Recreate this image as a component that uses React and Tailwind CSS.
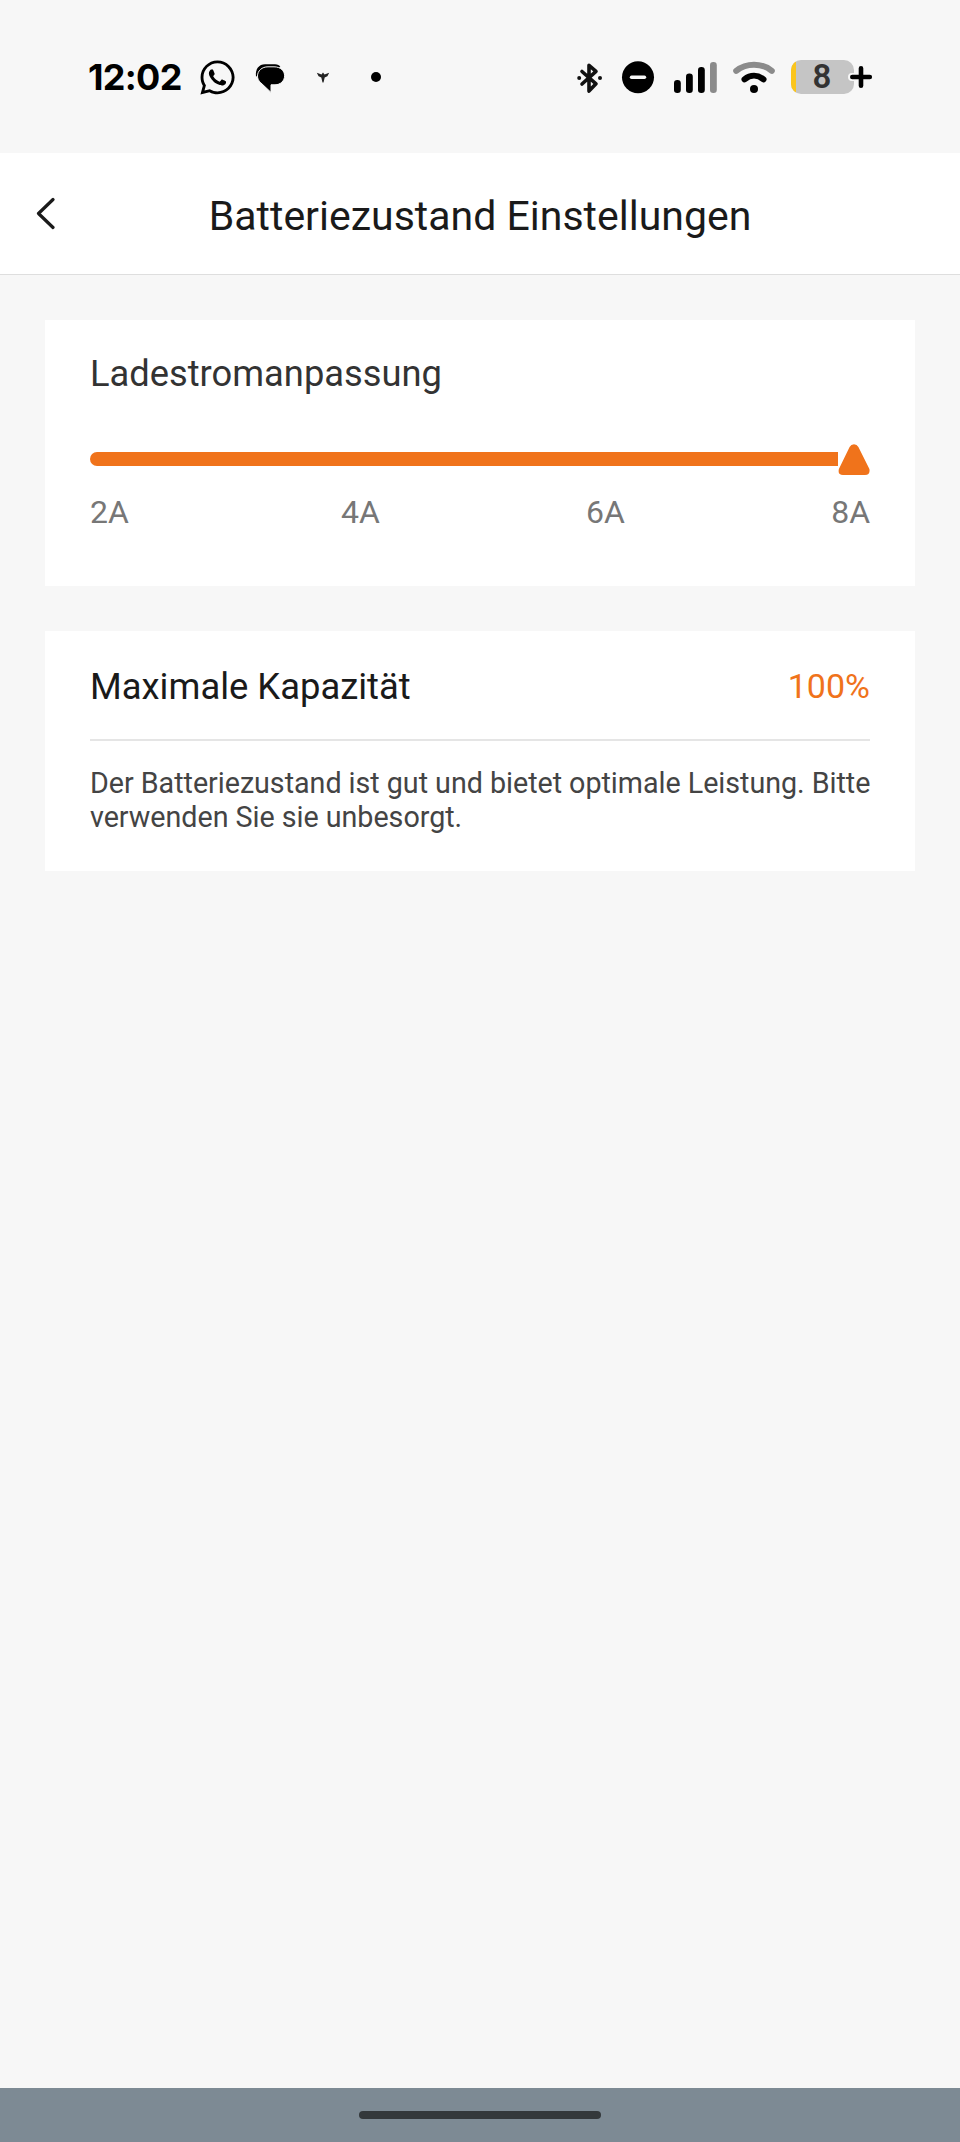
import React, { useState } from "react";
import { FaWhatsapp } from "react-icons/fa";

/* ─── Data ───────────────────────────────────────────────────── */

const CURRENT_STEPS = ["2A", "4A", "6A", "8A"];

/* ─── Status bar icons ───────────────────────────────────────── */

function ChatIcon() {
  return (
    <svg className="ml-[20px] h-9 w-[30px]" viewBox="0 0 30 36">
      <path d="M1 17.5C0 10 4 5.300 10 5.300h10c2.600 0 4.500 1 5.300 2.700" fill="#000" />
      <path
        d="M13 7.800h6c6.500 0 10.600 4 10.600 9s-4.100 9-9.600 9h-4v7.600L5.600 23.600C3.500 21.800 2.500 19.500 2.500 17c0-5.200 4.500-9.200 10.500-9.200z"
        fill="#000"
        stroke="#f7f7f7"
        strokeWidth="1"
      />
    </svg>
  );
}

function BirdIcon() {
  return (
    <svg className="ml-[31px] h-9 w-[14px]" viewBox="0 0 14 36">
      <path d="M.8 13.800l4.700 1.800 1.500-2 1.500 2 4.700-1.800-1.800 3.400-2.700 1.400L7.500 23.500h-1L5.300 18.600l-2.700-1.400z" fill="#222" />
    </svg>
  );
}

function BluetoothIcon() {
  return (
    <svg className="h-9 w-[27px]" viewBox="0 0 27 36" fill="none" stroke="#111" strokeWidth="3.600" strokeLinecap="round" strokeLinejoin="round">
      <path d="M6 12.500l14 12.300-7 7.300V6.300l7 6L6 25" />
      <circle cx="3.200" cy="19" r="2" fill="#111" stroke="none" />
      <circle cx="24" cy="19" r="2" fill="#111" stroke="none" />
    </svg>
  );
}

function DoNotDisturbIcon() {
  return (
    <svg className="ml-[18px] h-9 w-[34px]" viewBox="0 0 34 36">
      <circle cx="17" cy="18.300" r="16" fill="#000" />
      <path d="M10.500 18.300h13" stroke="#f7f7f7" strokeWidth="3.400" strokeLinecap="round" />
    </svg>
  );
}

function SignalIcon() {
  return (
    <svg className="ml-[19px] h-9 w-[43px]" viewBox="0 0 43 36">
      <rect x="0" y="21" width="6.800" height="13" rx="3.200" />
      <rect x="12" y="14.500" width="6.800" height="19.500" rx="3.200" />
      <rect x="24" y="8" width="6.800" height="26" rx="3.200" />
      <rect x="36" y="3" width="6.800" height="31" rx="3.200" fill="#8b8b8b" />
    </svg>
  );
}

function WifiIcon() {
  return (
    <svg className="ml-[15px] h-9 w-[44px]" viewBox="0 0 44 36" fill="none" strokeLinecap="round">
      <path d="M4.200 11.800C14.500 3.600 29.500 3.600 39.800 11.800" stroke="#8b8b8b" strokeWidth="6" />
      <path d="M12.500 20.300c5.800-4.600 13.200-4.600 19 0" stroke="#000" strokeWidth="6" />
      <circle cx="22" cy="30" r="4" fill="#000" />
    </svg>
  );
}

function BatteryIcon({ level }) {
  return (
    <div className="relative ml-[15px] h-9 w-[82px]">
      <svg className="h-9 w-[82px]" viewBox="0 0 82 36">
        <clipPath id="battery-body">
          <rect x="0" y="1" width="63" height="34" rx="10" />
        </clipPath>
        <g clipPath="url(#battery-body)">
          <rect width="63" height="36" fill="#c5c5c5" />
          <rect width="5" height="36" fill="#fbc51c" />
        </g>
        <path d="M61 18h19M70 9v19" stroke="#f7f7f7" strokeWidth="8" strokeLinecap="round" />
        <path d="M61.300 18h17.500M70 9.200v17.600" stroke="#000" strokeWidth="4.600" strokeLinecap="round" />
      </svg>
      <span className="absolute inset-y-0 left-0 w-[62px] text-center font-['Roboto'] text-[33px] leading-9 font-semibold text-[#333]">
        {level}
      </span>
    </div>
  );
}

function StatusBar() {
  return (
    <div className="flex h-[153px] items-start justify-between pt-[59px] pr-[87px] pl-[88px]">
      <div className="flex">
        <span className="w-[95px] font-['Inter'] text-[36px] leading-9 font-bold tracking-[-0.7px] whitespace-nowrap text-black">
          12:02
        </span>
        <FaWhatsapp className="-mt-px ml-[17px] h-[39px] w-[35px] text-black" />
        <ChatIcon />
        <BirdIcon />
        <svg className="ml-[41px] h-9 w-[10px]" viewBox="0 0 10 36">
          <circle cx="5" cy="18" r="5" />
        </svg>
      </div>
      <div className="flex">
        <BluetoothIcon />
        <DoNotDisturbIcon />
        <SignalIcon />
        <WifiIcon />
        <BatteryIcon level={8} />
      </div>
    </div>
  );
}

/* ─── Components ─────────────────────────────────────────────── */

function Header({ title }) {
  return (
    <header className="grid h-[122px] grid-cols-[90px_1fr_90px] items-start border-b border-[#dedede] bg-white">
      <button className="mt-[43px] ml-[35px] w-5" aria-label="Zurück">
        <svg className="h-9 w-5" viewBox="0 0 20 36" fill="none" stroke="#1a1a1a" strokeWidth="3.200" strokeLinecap="round" strokeLinejoin="round">
          <path d="M18 3.500L3.500 17.500 18 31.500" />
        </svg>
      </button>
      <h1 className="mt-[39px] text-center text-[41px] leading-[48px] whitespace-nowrap text-[#1a1a1a]">{title}</h1>
    </header>
  );
}

function CurrentCard() {
  const [step] = useState(3);
  const filled = (step / (CURRENT_STEPS.length - 1)) * 100;

  return (
    <section className="h-[266px] bg-white px-[45px] pt-[33px]">
      <h2 className="text-[36.3px] leading-[42px] text-[#333]">Ladestromanpassung</h2>
      <div className="mt-[49px] flex h-8 items-start">
        <div className="mt-2 h-[14px] flex-1">
          <div className="h-full rounded-l-[7px] bg-[#f0731b]" style={{ width: `${filled}%` }} />
        </div>
        <svg className="h-8 w-8" viewBox="0 0 32 32" fill="#f0731b">
          <path d="M11.600 3Q13 .2 16 .2t4.400 2.800l11 22Q32.500 31 27 31H5Q-.5 31 .9 25z" />
        </svg>
      </div>
      <div className="mt-[17px] flex justify-between text-[32px] leading-[38px] text-[#777]">
        {CURRENT_STEPS.map((label, i) => (
          <span key={label} className={i === 1 ? "ml-1.5" : ""}>{label}</span>
        ))}
      </div>
    </section>
  );
}

function CapacityCard({ capacity }) {
  return (
    <section className="mt-[45px] h-[240px] bg-white px-[45px] pt-[35px]">
      <div className="flex h-[75px] items-start justify-between border-b-2 border-[#e5e5e5]">
        <h2 className="text-[36.4px] leading-[42px] text-[#1a1a1a]">Maximale Kapazität</h2>
        <span className="text-[34px] leading-[40px] text-[#f0731b]">{capacity}%</span>
      </div>
      <p className="mt-[25px] text-[28.7px] leading-[34px] tracking-[-0.03px] whitespace-nowrap text-[#444]">
        Der Batteriezustand ist gut und bietet optimale Leistung. Bitte
        <br />
        verwenden Sie sie unbesorgt.
      </p>
    </section>
  );
}

/* ─── Battery Health Page ────────────────────────────────────── */

export default function App() {
  return (
    <div className="flex h-[2142px] w-[960px] flex-col bg-[#f7f7f7] font-['Roboto',sans-serif]">
      <StatusBar />
      <Header title="Batteriezustand Einstellungen" />
      <main className="flex-1 px-[45px] pt-[45px]">
        <CurrentCard />
        <CapacityCard capacity={100} />
      </main>
      <footer className="flex h-[54px] items-center justify-center bg-[#7d8a94]">
        <div className="h-2 w-[242px] rounded-full bg-[#33383b]" />
      </footer>
    </div>
  );
}
